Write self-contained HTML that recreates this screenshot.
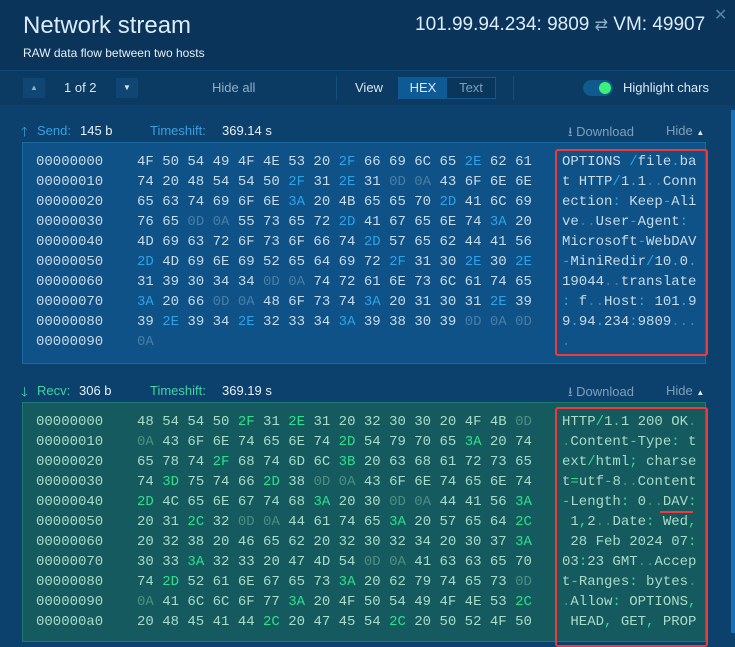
<!DOCTYPE html>
<html><head><style>
*{margin:0;padding:0;box-sizing:border-box}
body{width:735px;height:633px;overflow:hidden;background:#0c416d;font-family:"Liberation Sans",sans-serif;position:relative;color:#dbe8f2}
.a{position:absolute;white-space:nowrap}
.mono{font-family:"Liberation Mono",monospace;font-size:14px;line-height:20px;white-space:pre}
.b{color:#2ea3ea}.d{color:#4a7ea6}
.g{color:#2fe08c}.e{color:#4f8e86}
.h{font-size:13px;top:0}
</style></head><body>
<div class="a" style="left:0;top:0;width:735px;height:70px;background:#0a345a"></div>
<div class="a" style="left:0;top:70px;width:735px;height:35px;background:#0b3a62;border-top:1px solid #0f4a78"></div>
<div class="a" style="left:23px;top:12px;font-size:24px;color:#dcecf7">Network stream</div>
<div class="a" style="left:23px;top:46px;font-size:12px;color:#e6f0f7">RAW data flow between two hosts</div>
<div class="a" style="left:415px;top:14px;font-size:19px;color:#dcecf7">101.99.94.234: 9809 <span style="color:#8fb0c8;font-size:16px">⇄</span> VM: 49907</div>
<div class="a" style="left:714px;top:5px;font-size:16px;color:#4f86b0">✕</div>
<div class="a" style="left:23px;top:78px;width:22px;height:20px;background:#0f4674;color:#8ab0cc;font-size:8px;text-align:center;line-height:20px">▲</div>
<div class="a" style="left:64px;top:80px;font-size:13px">1 of 2</div>
<div class="a" style="left:116px;top:78px;width:22px;height:20px;background:#0f4674;color:#dbe8f2;font-size:8px;text-align:center;line-height:20px">▼</div>
<div class="a" style="left:212px;top:80px;font-size:13px;color:#8fb0c8">Hide all</div>
<div class="a" style="left:336px;top:76px;width:1px;height:24px;background:#134f7e"></div>
<div class="a" style="left:355px;top:80px;font-size:13px">View</div>
<div class="a" style="left:398px;top:77px;width:98px;height:22px;border:1px solid #11588f;background:#0a365c"></div>
<div class="a" style="left:399px;top:78px;width:48px;height:20px;background:#0e5a94;font-size:13px;text-align:center;line-height:20px">HEX</div>
<div class="a" style="left:447px;top:78px;width:48px;height:20px;font-size:13px;text-align:center;line-height:20px;color:#7f9fb8">Text</div>
<div class="a" style="left:513px;top:76px;width:1px;height:24px;background:#134f7e"></div>
<div class="a" style="left:583px;top:80px;width:30px;height:16px;border-radius:8px;background:#105a8e"></div>
<div class="a" style="left:599px;top:82px;width:12px;height:12px;border-radius:6px;background:#3df07a"></div>
<div class="a" style="left:623px;top:80px;font-size:13px">Highlight chars</div>
<div class="a" style="left:731px;top:110px;width:4px;height:523px;background:#1a70b8"></div>

<div class="a" style="left:0;top:123px;width:735px;height:16px">
<div class="a h" style="left:21px;color:#3aa0e0">🡑</div>
<div class="a h" style="left:37px;color:#3aa0e0">Send:</div>
<div class="a h" style="left:80px;color:#e6f0f7">145 b</div>
<div class="a h" style="left:150px;color:#3aa0e0">Timeshift:</div>
<div class="a h" style="left:222px;color:#e6f0f7">369.14 s</div>
<div class="a h" style="left:568px;color:#7f9fb8">⭳ Download</div>
<div class="a h" style="left:666px;color:#7f9fb8">Hide <span style="font-size:8px;color:#dbe8f2">▲</span></div>
</div>
<div class="a" style="left:22px;top:142px;width:684px;height:222px;background:#0e5288;border:1px solid #1a6aa0"></div>
<div class="a mono" style="left:36px;top:152px;color:#c8dbe9">00000000
00000010
00000020
00000030
00000040
00000050
00000060
00000070
00000080
00000090</div>
<div class="a mono" style="left:137px;top:152px;color:#c8dbe9">4F 50 54 49 4F 4E 53 20 <span class="b">2F</span> 66 69 6C 65 <span class="b">2E</span> 62 61
74 20 48 54 54 50 <span class="b">2F</span> 31 <span class="b">2E</span> 31 <span class="d">0D 0A</span> 43 6F 6E 6E
65 63 74 69 6F 6E <span class="b">3A</span> 20 4B 65 65 70 <span class="b">2D</span> 41 6C 69
76 65 <span class="d">0D 0A</span> 55 73 65 72 <span class="b">2D</span> 41 67 65 6E 74 <span class="b">3A</span> 20
4D 69 63 72 6F 73 6F 66 74 <span class="b">2D</span> 57 65 62 44 41 56
<span class="b">2D</span> 4D 69 6E 69 52 65 64 69 72 <span class="b">2F</span> 31 30 <span class="b">2E</span> 30 <span class="b">2E</span>
31 39 30 34 34 <span class="d">0D 0A</span> 74 72 61 6E 73 6C 61 74 65
<span class="b">3A</span> 20 66 <span class="d">0D 0A</span> 48 6F 73 74 <span class="b">3A</span> 20 31 30 31 <span class="b">2E</span> 39
39 <span class="b">2E</span> 39 34 <span class="b">2E</span> 32 33 34 <span class="b">3A</span> 39 38 30 39 <span class="d">0D 0A 0D</span>
<span class="d">0A</span></div>
<div class="a" style="left:555px;top:149px;width:153px;height:207px;border:2px solid #f03a3a;border-radius:3px"></div>
<div class="a mono" style="left:562px;top:152px;color:#c8dbe9">OPTIONS <span class="b">/</span>file<span class="b">.</span>ba
t HTTP<span class="b">/</span>1<span class="b">.</span>1<span class="d">..</span>Conn
ection<span class="b">:</span> Keep<span class="b">-</span>Ali
ve<span class="d">..</span>User<span class="b">-</span>Agent<span class="b">:</span>
Microsoft<span class="b">-</span>WebDAV
<span class="b">-</span>MiniRedir<span class="b">/</span>10<span class="b">.</span>0<span class="b">.</span>
19044<span class="d">..</span>translate
<span class="b">:</span> f<span class="d">..</span>Host<span class="b">:</span> 101<span class="b">.</span>9
9<span class="b">.</span>94<span class="b">.</span>234<span class="b">:</span>9809<span class="d">...</span>
<span class="d">.</span></div>

<div class="a" style="left:0;top:383px;width:735px;height:16px">
<div class="a h" style="left:21px;color:#3fd6a0">🡓</div>
<div class="a h" style="left:37px;color:#3fd6a0">Recv:</div>
<div class="a h" style="left:79px;color:#e6f0f7">306 b</div>
<div class="a h" style="left:150px;color:#3fd6a0">Timeshift:</div>
<div class="a h" style="left:222px;color:#e6f0f7">369.19 s</div>
<div class="a h" style="left:568px;color:#7f9fb8">⭳ Download</div>
<div class="a h" style="left:666px;color:#7f9fb8">Hide <span style="font-size:8px;color:#dbe8f2">▲</span></div>
</div>
<div class="a" style="left:22px;top:402px;width:684px;height:240px;background:#145a5e;border:1px solid #1f7a72"></div>
<div class="a mono" style="left:36px;top:412px;color:#a9dcc8">00000000
00000010
00000020
00000030
00000040
00000050
00000060
00000070
00000080
00000090
000000a0</div>
<div class="a mono" style="left:137px;top:412px;color:#a9dcc8">48 54 54 50 <span class="g">2F</span> 31 <span class="g">2E</span> 31 20 32 30 30 20 4F 4B <span class="e">0D</span>
<span class="e">0A</span> 43 6F 6E 74 65 6E 74 <span class="g">2D</span> 54 79 70 65 <span class="g">3A</span> 20 74
65 78 74 <span class="g">2F</span> 68 74 6D 6C <span class="g">3B</span> 20 63 68 61 72 73 65
74 <span class="g">3D</span> 75 74 66 <span class="g">2D</span> 38 <span class="e">0D 0A</span> 43 6F 6E 74 65 6E 74
<span class="g">2D</span> 4C 65 6E 67 74 68 <span class="g">3A</span> 20 30 <span class="e">0D 0A</span> 44 41 56 <span class="g">3A</span>
20 31 <span class="g">2C</span> 32 <span class="e">0D 0A</span> 44 61 74 65 <span class="g">3A</span> 20 57 65 64 <span class="g">2C</span>
20 32 38 20 46 65 62 20 32 30 32 34 20 30 37 <span class="g">3A</span>
30 33 <span class="g">3A</span> 32 33 20 47 4D 54 <span class="e">0D 0A</span> 41 63 63 65 70
74 <span class="g">2D</span> 52 61 6E 67 65 73 <span class="g">3A</span> 20 62 79 74 65 73 <span class="e">0D</span>
<span class="e">0A</span> 41 6C 6C 6F 77 <span class="g">3A</span> 20 4F 50 54 49 4F 4E 53 <span class="g">2C</span>
20 48 45 41 44 <span class="g">2C</span> 20 47 45 54 <span class="g">2C</span> 20 50 52 4F 50</div>
<div class="a" style="left:555px;top:407px;width:153px;height:240px;border:2px solid #f03a3a;border-radius:3px"></div>
<div class="a mono" style="left:562px;top:412px;color:#a9dcc8">HTTP<span class="g">/</span>1<span class="g">.</span>1 200 OK<span class="e">.</span>
<span class="e">.</span>Content<span class="g">-</span>Type<span class="g">:</span> t
ext<span class="g">/</span>html<span class="g">;</span> charse
t<span class="g">=</span>utf<span class="g">-</span>8<span class="e">..</span>Content
<span class="g">-</span>Length<span class="g">:</span> 0<span class="e">..</span>DAV<span class="g">:</span>
 1<span class="g">,</span>2<span class="e">..</span>Date<span class="g">:</span> Wed<span class="g">,</span>
 28 Feb 2024 07<span class="g">:</span>
03<span class="g">:</span>23 GMT<span class="e">..</span>Accep
t<span class="g">-</span>Ranges<span class="g">:</span> bytes<span class="e">.</span>
<span class="e">.</span>Allow<span class="g">:</span> OPTIONS<span class="g">,</span>
 HEAD<span class="g">,</span> GET<span class="g">,</span> PROP</div>
<div class="a" style="left:660px;top:511px;width:33px;height:2px;background:#f03a3a"></div>
</body></html>
